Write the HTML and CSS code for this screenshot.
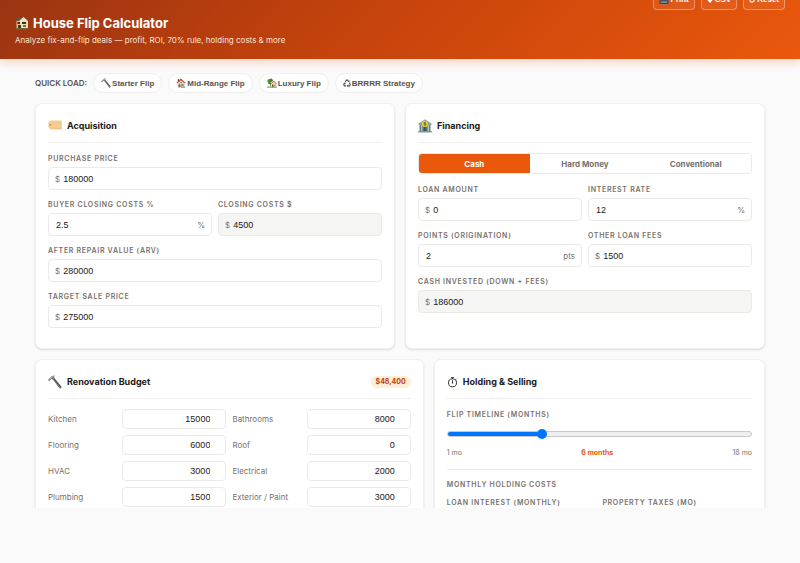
FILE: index.html
```html
<!DOCTYPE html>
<html lang="en">
<head>
<meta charset="utf-8">
<meta name="viewport" content="width=device-width, initial-scale=1">
<title>House Flip Calculator</title>
<link rel="stylesheet" href="styles.css">
</head>
<body>
<svg class="sprite" aria-hidden="true">
  <symbol id="i-house" viewBox="0 0 14 14">
    <path d="M1 5 3 1.5h8L13 5z" fill="#5b5748"/><path d="M4 5 8.500 1 13 5v8H4z" fill="#f3dfb4"/><path d="M1.500 5H5v8H1.500z" fill="#e2bd83"/>
    <path d="M2.500 6h2.500v2H2.500zM7 6h4v2H7z" fill="#3b3026"/><path d="M3 9h3v4H3z" fill="#54331f"/><path d="M8 9h3v2H8z" fill="#7a6a52"/><path d="M1 12h12v1.500H1z" fill="#6b6a3a"/>
  </symbol>
  <symbol id="i-hammer" viewBox="0 0 14 14">
    <path d="m4.600 4 1.500-1.200L13.700 12l-1.700 1.700z" fill="#4b4643"/><path d="m4.600 4 .7-.6 7.500 9.300-.8.700z" fill="#8b8682"/>
    <path d="M.3 5.200.8 3.700 4.100 1 7.300.400 5.800 1.700 6.700 3.200 5 4.700 3.800 3.800 1.800 5.200 1.300 6.400z" fill="#77777a"/><path d="m.8 4.200 3.300-2.700 2-.4-1.500 1.200L1.800 4.500z" fill="#b9babd"/>
  </symbol>
  <symbol id="i-home" viewBox="0 0 14 14">
    <path d="M2.500 6.500 7 2.500l5 4V13H2.500z" fill="#e8d9c2"/><path d="M2.500 1.500h2v4h-2z" fill="#8a4634"/><path d="M7 .8.800 6.800l1 1L7 3.200l5.200 4.600 1-1z" fill="#c2492f"/>
    <path d="M3.500 9h2.500v4H3.500z" fill="#83452d"/><path d="M7.500 8.500h3v2.500h-3z" fill="#5680a0"/><path d="M6 5.500h2v1.700H6z" fill="#60798a"/><path d="M7 12h6v1.500H7z" fill="#6a8a3a"/>
  </symbol>
  <symbol id="i-garden" viewBox="0 0 14 14">
    <path d="M4.300 6h1v6h-1z" fill="#7b4d2b"/><circle cx="3" cy="4" r="2.600" fill="#5a9b38"/><circle cx="5.600" cy="3.200" r="2.500" fill="#3f8130"/><circle cx="3.500" cy="6.500" r="2.200" fill="#4f9134"/>
    <path d="m6 8 3.500-3L13 8v5H6z" fill="#eddfc8"/><path d="M9.500 3.800 5.300 7.600l.8.800 3.400-3 3.400 3 .9-.8z" fill="#c25034"/><path d="M7 9h2v4H7z" fill="#7a432b"/><path d="M10 9h2v2h-2z" fill="#6188a4"/><path d="M0 12h14v1.500H0z" fill="#6ba342"/>
  </symbol>
  <symbol id="i-recycle" viewBox="0 0 14 14">
    <g fill="none" stroke="currentColor" stroke-width="1.900"><path d="M4 5 6 1.900h2.200L9.700 4.500"/><path d="m11.200 6.500 1.500 2.800L11.500 12H8"/><path d="M5.500 12h-3L1.300 9.500l1.600-2.700"/></g>
    <path d="m7.800 5 3.400.8.700-3.500zM9 9.500 6.400 12 9 14zM.5 7.400 4.200 6l.8 3.400z" fill="currentColor"/>
  </symbol>
  <symbol id="i-tag" viewBox="0 0 14 14">
    <path d="M2.500 1.500H13q.8 0 .8.800v7.200q0 .8-.8.800H2.500L.3 8V3.800z" fill="#f6cb92"/><path d="M2.500 9.500h11.300q0 .8-.8.800H2.500z" fill="#ebbb7e"/><circle cx="2.300" cy="5.900" r=".8" fill="#b98a54"/>
  </symbol>
  <symbol id="i-bank" viewBox="0 0 14 14">
    <path d="M.5 4.500 7 .3l6.500 4.200V6H.5z" fill="#8ba3a2"/><path d="M1 6h12v6H1z" fill="#c3cfc8"/><path d="M1.800 6h1.500v6H1.800zM4.300 6h1.200v6H4.300zM8.500 6h1.200v6H8.500zM10.800 6h1.500v6h-1.500z" fill="#688887"/>
    <path d="M5.300 8h3.400v4.500H5.300z" fill="#3f5963"/><circle cx="7" cy="4.900" r="3.100" fill="#e4c340"/><path d="M8 3.600H6.700q-.7 0-.7.650t.7.650h.7q.7 0 .7.650t-.7.650H6M7 3v3.800" fill="none" stroke="#6c6020" stroke-width=".7"/><path d="M.2 12h13.600v1.500H.2z" fill="#7f9693"/>
  </symbol>
  <symbol id="i-timer" viewBox="0 0 14 14">
    <g fill="none" stroke="#292524" stroke-width="1.200"><circle cx="7" cy="7.400" r="5.100"/><path d="M7 2.300V.900M5.300.700h3.400M10.900 3.500l1.200-1.200M7 7.500V4.200"/></g><circle cx="7" cy="7.500" r=".9" fill="#292524"/>
  </symbol>
  <symbol id="i-print" viewBox="0 0 14 14">
    <path d="M3 1h8v5H3z" fill="#e7e5e4"/><path d="M.5 5h13v6H.5z" fill="#4a5058"/><path d="M2.500 9h9v4h-9z" fill="#7d9ab0"/><path d="M1 11h12v1.500H1z" fill="#343940"/>
  </symbol>
  <symbol id="i-down" viewBox="0 0 14 14"><path d="M5 0h4v6h5l-7 8-7-8h5z" fill="currentColor"/></symbol>
  <symbol id="i-reset" viewBox="0 0 14 14"><path d="M4 3a5 5 0 1 0 6 0M4 0v4H.500" fill="none" stroke="currentColor" stroke-width="2.500"/></symbol>
</svg>

<div class="app">
  <header class="header">
    <div>
      <h1><svg class="icon icon-lg"><use href="#i-house"/></svg>House Flip Calculator</h1>
      <p>Analyze fix-and-flip deals — profit, ROI, 70% rule, holding costs &amp; more</p>
    </div>
    <div class="actions">
      <button type="button"><svg class="icon"><use href="#i-print"/></svg>Print</button>
      <button type="button"><svg class="icon icon-xs"><use href="#i-down"/></svg>CSV</button>
      <button type="button"><svg class="icon icon-xs"><use href="#i-reset"/></svg>Reset</button>
    </div>
  </header>

  <main class="main">
    <div class="presets">
      <span class="presets-label">QUICK LOAD:</span>
      <button type="button"><svg class="icon"><use href="#i-hammer"/></svg>Starter Flip</button>
      <button type="button"><svg class="icon"><use href="#i-home"/></svg>Mid-Range Flip</button>
      <button type="button"><svg class="icon"><use href="#i-garden"/></svg>Luxury Flip</button>
      <button type="button"><svg class="icon icon-sm"><use href="#i-recycle"/></svg>BRRRR Strategy</button>
    </div>

    <div class="row row-even">
      <section class="card">
        <div class="card-head"><svg class="icon icon-lg"><use href="#i-tag"/></svg><h2>Acquisition</h2></div>
        <div class="fields">
          <div class="field wide"><label for="price">PURCHASE PRICE</label><div class="box"><span>$</span><input id="price" type="text" inputmode="decimal" value="180000"></div></div>
          <div class="field"><label for="ccp">BUYER CLOSING COSTS %</label><div class="box suffixed"><input id="ccp" type="text" inputmode="decimal" value="2.5"><span>%</span></div></div>
          <div class="field"><label for="cc">CLOSING COSTS $</label><div class="box readonly"><span>$</span><input id="cc" type="text" value="4500" readonly></div></div>
          <div class="field wide"><label for="arv">AFTER REPAIR VALUE (ARV)</label><div class="box"><span>$</span><input id="arv" type="text" inputmode="decimal" value="280000"></div></div>
          <div class="field wide"><label for="sale">TARGET SALE PRICE</label><div class="box"><span>$</span><input id="sale" type="text" inputmode="decimal" value="275000"></div></div>
        </div>
      </section>

      <section class="card">
        <div class="card-head"><svg class="icon icon-lg"><use href="#i-bank"/></svg><h2>Financing</h2></div>
        <div class="tabs">
          <button type="button" class="active">Cash</button>
          <button type="button">Hard Money</button>
          <button type="button">Conventional</button>
        </div>
        <div class="fields">
          <div class="field"><label for="loan">LOAN AMOUNT</label><div class="box"><span>$</span><input id="loan" type="text" inputmode="decimal" value="0"></div></div>
          <div class="field"><label for="rate">INTEREST RATE</label><div class="box suffixed"><input id="rate" type="text" inputmode="decimal" value="12"><span>%</span></div></div>
          <div class="field"><label for="points">POINTS (ORIGINATION)</label><div class="box suffixed"><input id="points" type="text" inputmode="decimal" value="2"><span>pts</span></div></div>
          <div class="field"><label for="fees">OTHER LOAN FEES</label><div class="box"><span>$</span><input id="fees" type="text" inputmode="decimal" value="1500"></div></div>
          <div class="field wide"><label for="cash">CASH INVESTED (DOWN + FEES)</label><div class="box readonly"><span>$</span><input id="cash" type="text" value="186000" readonly></div></div>
        </div>
      </section>
    </div>

    <div class="row row-budget">
      <section class="card">
        <div class="card-head"><svg class="icon icon-lg"><use href="#i-hammer"/></svg><h2>Renovation Budget</h2><span class="badge">$48,400</span></div>
        <div class="budget">
          <div class="item"><label for="r1">Kitchen</label><input id="r1" type="text" inputmode="decimal" value="15000"></div>
          <div class="item"><label for="r2">Bathrooms</label><input id="r2" type="text" inputmode="decimal" value="8000"></div>
          <div class="item"><label for="r3">Flooring</label><input id="r3" type="text" inputmode="decimal" value="6000"></div>
          <div class="item"><label for="r4">Roof</label><input id="r4" type="text" inputmode="decimal" value="0"></div>
          <div class="item"><label for="r5">HVAC</label><input id="r5" type="text" inputmode="decimal" value="3000"></div>
          <div class="item"><label for="r6">Electrical</label><input id="r6" type="text" inputmode="decimal" value="2000"></div>
          <div class="item"><label for="r7">Plumbing</label><input id="r7" type="text" inputmode="decimal" value="1500"></div>
          <div class="item"><label for="r8">Exterior / Paint</label><input id="r8" type="text" inputmode="decimal" value="3000"></div>
        </div>
      </section>

      <section class="card">
        <div class="card-head"><svg class="icon icon-md"><use href="#i-timer"/></svg><h2>Holding &amp; Selling</h2></div>
        <div class="timeline">
          <label for="months">FLIP TIMELINE (MONTHS)</label>
          <input id="months" type="range" min="1" max="18" step="0.1" value="6.2" style="--fill: 31%">
          <div class="scale"><span>1 mo</span><strong>6 months</strong><span>18 mo</span></div>
        </div>
        <h3>MONTHLY HOLDING COSTS</h3>
        <div class="fields">
          <div class="field"><label for="interest">LOAN INTEREST (MONTHLY)</label><div class="box"><input id="interest" type="text"></div></div>
          <div class="field"><label for="tax">PROPERTY TAXES (MO)</label><div class="box"><input id="tax" type="text"></div></div>
        </div>
      </section>
    </div>
  </main>
</div>
</body>
</html>
```
FILE: styles.css
```css
:root {
  --accent: #ea580c;
  --ink: #1c1917;
  --muted: #78716c;
  --line: #ebeae9;
  --ui: Inter, "Liberation Sans", sans-serif;
  --control: "Liberation Sans", Arial, sans-serif;
}

* { box-sizing: border-box; }

body {
  margin: 0;
  height: 100vh;
  padding-bottom: 55px;
  overflow: hidden;
  background: #fafafa;
  color: var(--ink);
  font: 8px/12px var(--ui);
}

h1, h2, h3, p { margin: 0; }
input, button { font-family: var(--control); margin: 0; min-width: 0; }
.sprite { display: none; }

.app { height: 100%; overflow: hidden; }

.icon { width: 10px; height: 10px; flex: none; }
.icon-xs { width: 6px; height: 6px; }
.icon-sm { width: 8px; height: 8px; }
.icon-md { width: 11px; height: 11px; }
.icon-lg { width: 14px; height: 14px; }

.header {
  display: flex;
  justify-content: space-between;
  align-items: flex-start;
  padding: 14px 15px 13px;
  background: linear-gradient(135deg, #9a3412, #c2410c 40%, #ea580c);
  box-shadow: 0 2px 10px rgba(234, 88, 12, .3);
  color: #fff;
}

.header h1 {
  display: flex;
  align-items: center;
  gap: 4px;
  font-size: 13px;
  line-height: 18px;
  font-weight: 700;
}

.header p { margin-top: 2px; color: #fde3d0; }

.actions { display: flex; gap: 6px; margin-top: -25px; }

.actions button {
  display: flex;
  align-items: center;
  gap: 2px;
  height: 21px;
  padding: 0 5px;
  border: 1px solid rgba(255, 255, 255, .35);
  border-radius: 4px;
  background: rgba(255, 255, 255, .06);
  color: #fff;
  font-size: 8px;
  font-weight: 700;
}

.main { padding: 14px 35px; }

.presets { display: flex; align-items: center; gap: 6px; margin-bottom: 10px; }
.presets-label { color: #57534e; font-weight: 600; }

.presets button {
  display: flex;
  align-items: center;
  gap: 1px;
  height: 20px;
  padding: 0 7px;
  border: 1px solid #f0efee;
  border-radius: 10px;
  background: #fff;
  color: #57534e;
  font-size: 8px;
  font-weight: 700;
}

.row { display: grid; gap: 10px; margin-bottom: 10px; }
.row-even { grid-template-columns: 1fr 1fr; }
.row-budget { grid-template-columns: 27fr 23fr; }

.card {
  min-width: 0;
  padding: 12px;
  border: 1px solid #f0efee;
  border-radius: 7px;
  background: #fff;
  box-shadow: 0 1px 2px rgba(0, 0, 0, .12);
}

.card-head {
  display: flex;
  align-items: center;
  gap: 5px;
  margin-bottom: 10px;
  padding-bottom: 6px;
  border-bottom: 1px solid #eeedec;
}

.card-head h2 { font-size: 9px; line-height: 20px; font-weight: 700; }

.badge {
  margin-left: auto;
  padding: 0 5px;
  border-radius: 6px;
  background: #ffedd5;
  color: #c2410c;
  font-size: 7px;
  font-weight: 700;
}

.fields { display: grid; grid-template-columns: 1fr 1fr; gap: 9px 6px; margin-bottom: 8px; }
.field { display: grid; gap: 2px; min-width: 0; }
.wide { grid-column: 1 / -1; }

.field label, .timeline label, h3 {
  color: var(--muted);
  font-size: 7px;
  line-height: 12px;
  font-weight: 600;
  letter-spacing: .1em;
  white-space: nowrap;
}

.box {
  display: flex;
  align-items: center;
  gap: 3px;
  height: 23px;
  padding: 0 6px;
  border: 1px solid var(--line);
  border-radius: 4px;
  background: #fff;
}

.box span { color: var(--muted); }
.box.readonly { background: #f5f5f4; }
.box.suffixed { padding-left: 7px; }

.box input {
  flex: 1;
  padding: 0;
  border: 0;
  background: none;
  color: var(--ink);
  font-size: 9px;
}

.tabs {
  display: grid;
  grid-template-columns: repeat(3, 1fr);
  height: 21px;
  margin-bottom: 10px;
  overflow: hidden;
  border: 1px solid var(--line);
  border-radius: 4px;
}

.tabs button {
  padding: 0;
  border: 0;
  background: #fff;
  color: var(--muted);
  font: 700 8px var(--ui);
}

.tabs .active { background: var(--accent); color: #fff; }

.budget { display: grid; grid-template-columns: 1fr 1fr; gap: 6px; }
.item { display: grid; grid-template-columns: 5fr 7fr; align-items: center; }
.item label { color: var(--muted); white-space: nowrap; }

.item input {
  width: 100%;
  height: 20px;
  padding: 0 15px 0 6px;
  border: 1px solid var(--line);
  border-radius: 4px;
  background: #fff;
  color: var(--ink);
  font-size: 9px;
  text-align: right;
}

.timeline {
  display: grid;
  gap: 8px;
  margin-bottom: 9px;
  padding-bottom: 10px;
  border-bottom: 1px solid var(--line);
}

.timeline input {
  appearance: none;
  width: 100%;
  height: 10px;
  background: none;
}

.timeline input::-webkit-slider-runnable-track {
  height: 6px;
  border: 1px solid #c9c9c9;
  border-radius: 3px;
  background: linear-gradient(90deg, #0075ff var(--fill), #efefef var(--fill)) border-box;
}

.timeline input::-webkit-slider-thumb {
  appearance: none;
  width: 10px;
  height: 10px;
  margin-top: -3px;
  border-radius: 50%;
  background: #0075ff;
}

.scale { display: flex; justify-content: space-between; color: var(--muted); font-size: 7px; }
.scale strong { color: var(--accent); font-weight: 700; }

h3 { margin-bottom: 6px; }
```
